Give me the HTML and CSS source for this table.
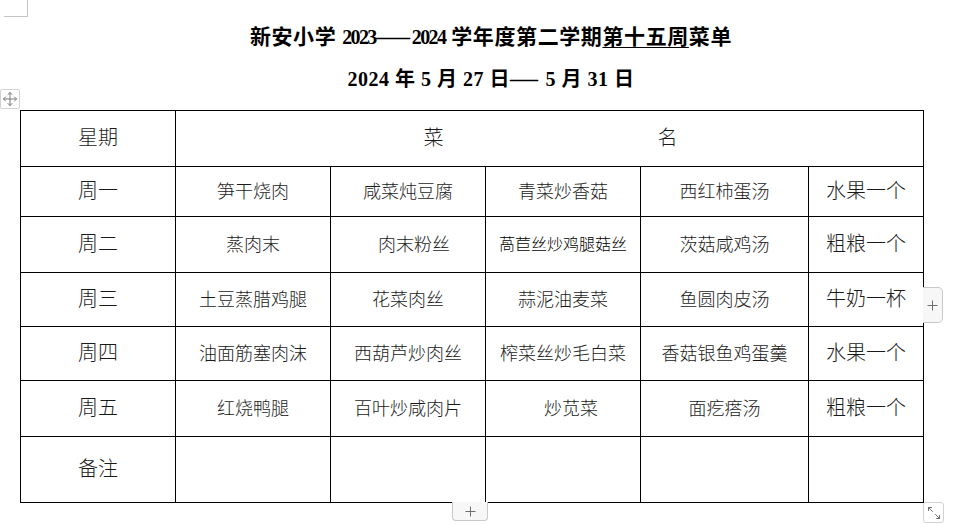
FILE: index.html
```html
<!DOCTYPE html>
<html lang="zh-CN">
<head>
<meta charset="utf-8">
<title>菜单</title>
<link rel="stylesheet" href="styles.css">
</head>
<body>
<div class="page">
  <div class="corner-mark"></div>
  <div class="title">
    <div class="tline tline1">新安小学 <span class="num">2023</span><span class="dash dash1">—</span><span class="num">2024</span> 学年度第二学期<span class="ul">第十五周</span>菜单</div>
    <div class="tline tline2">2024 年 5 月 27 日<span class="dash dash2">—</span> 5 月 31 日</div>
  </div>
  <div class="table-wrap">
    <span class="move-handle">
      <svg width="16" height="16" viewBox="0 0 16 16" fill="none" stroke="#7a7a7a" stroke-width="1" stroke-linecap="round" stroke-linejoin="round">
        <path d="M8 1.5v13M1.5 8h13"/>
        <path d="M6 3.5L8 1.5l2 2M6 12.5L8 14.5l2-2M3.5 6L1.5 8l2 2M12.5 6L14.5 8l-2 2"/>
      </svg>
    </span>
    <table class="menu">
      <colgroup>
        <col class="c-day"><col class="c-dish"><col class="c-dish"><col class="c-dish"><col class="c-soup"><col class="c-extra">
      </colgroup>
      <tr class="r-head">
        <td class="day">星期</td>
        <td class="head" colspan="5"><span class="hd"><span>菜</span><span>名</span></span></td>
      </tr>
      <tr class="r1">
        <td class="day">周一</td><td>笋干烧肉</td><td>咸菜炖豆腐</td><td>青菜炒香菇</td><td>西红柿蛋汤</td><td class="extra">水果一个</td>
      </tr>
      <tr class="r2">
        <td class="day">周二</td><td>蒸肉末</td><td class="shift-a">肉末粉丝</td><td class="small">萵苣丝炒鸡腿菇丝</td><td>茨菇咸鸡汤</td><td class="extra">粗粮一个</td>
      </tr>
      <tr class="r3">
        <td class="day">周三</td><td>土豆蒸腊鸡腿</td><td>花菜肉丝</td><td>蒜泥油麦菜</td><td>鱼圆肉皮汤</td><td class="extra">牛奶一杯</td>
      </tr>
      <tr class="r4">
        <td class="day">周四</td><td>油面筋塞肉沫</td><td>西葫芦炒肉丝</td><td>榨菜丝炒毛白菜</td><td>香菇银鱼鸡蛋羹</td><td class="extra">水果一个</td>
      </tr>
      <tr class="r5">
        <td class="day">周五</td><td>红烧鸭腿</td><td>百叶炒咸肉片</td><td class="shift-b">炒苋菜</td><td>面疙瘩汤</td><td class="extra">粗粮一个</td>
      </tr>
      <tr class="r6">
        <td class="day">备注</td><td></td><td></td><td></td><td></td><td></td>
      </tr>
    </table>
    <span class="add-col">
      <svg width="11" height="11" viewBox="0 0 11 11" stroke="#6e6e6e" stroke-width="1"><path d="M5.5 0.5v10M0.5 5.5h10"/></svg>
    </span>
    <span class="add-row">
      <svg width="11" height="11" viewBox="0 0 11 11" stroke="#6e6e6e" stroke-width="1"><path d="M5.5 0.5v10M0.5 5.5h10"/></svg>
    </span>
    <span class="resize">
      <svg width="16" height="16" viewBox="0 0 16 16" fill="none" stroke="#6e6e6e" stroke-width="1" stroke-linecap="round" stroke-linejoin="round">
        <path d="M2.5 2.5l4 4M2.5 2.5v3M2.5 2.5h3"/>
        <path d="M13.5 13.5l-4-4M13.5 13.5v-3M13.5 13.5h-3"/>
      </svg>
    </span>
  </div>
</div>
</body>
</html>
```

FILE: styles.css
```css
html, body {
  margin: 0;
  padding: 0;
  background: #ffffff;
}

.page {
  position: relative;
  width: 960px;
  height: 524px;
  overflow: hidden;
  font-family: "Liberation Serif", "Noto Sans CJK SC", serif;
  color: #111;
}

.corner-mark {
  position: absolute;
  left: 4px;
  top: 0;
  width: 23px;
  height: 16px;
  border-right: 1px solid #c4c4c4;
  border-bottom: 1px solid #c4c4c4;
}

.title {
  padding-top: 16px;
  padding-left: 22px;
  text-align: center;
  font-weight: bold;
  color: #000;
}

.tline {
  height: 42px;
  line-height: 42px;
  white-space: nowrap;
}

.tline1 {
  font-size: 21px;
  letter-spacing: 0.6px;
}

.tline1 .num {
  font-size: 20px;
  letter-spacing: -1.6px;
}

.dash {
  display: inline-block;
  text-align: left;
  overflow: visible;
  font-size: 20px;
  letter-spacing: 0;
}

.dash1 {
  width: 36px;
  transform: scaleX(1.7);
  transform-origin: 0 50%;
}

.dash2 {
  width: 30px;
  transform: scaleX(1.4);
  transform-origin: 0 50%;
}

.tline2 {
  font-size: 20px;
  letter-spacing: 0.5px;
}

.ul {
  text-decoration: underline;
  text-decoration-thickness: 1px;
  text-underline-offset: 3px;
}

.table-wrap {
  position: relative;
  margin-top: 10px;
  margin-left: 20px;
  width: 904px;
}

.menu {
  border-collapse: collapse;
  table-layout: fixed;
  width: 904px;
}

.menu td {
  border: 1px solid #000;
  padding: 0 0 4px 0;
  text-align: center;
  vertical-align: middle;
  font-size: 18px;
  font-weight: 300;
  color: #1a1a1a;
  white-space: nowrap;
}

.c-day { width: 155px; }
.c-dish { width: 155px; }
.c-soup { width: 168px; }
.c-extra { width: 115px; }

.menu td.day,
.menu td.extra,
.menu td.head {
  font-size: 20px;
}

.hd {
  display: inline-flex;
  gap: 214px;
  padding-left: 2px;
}

.menu td.small {
  font-size: 16px;
  font-family: "Noto Sans CJK SC", sans-serif;
  color: #000;
}

.menu td.shift-a { padding-left: 12px; }
.menu td.shift-b { padding-left: 16px; }

.r-head td { height: 51px; }
.r1 td { height: 45px; }
.r2 td { height: 51px; }
.r3 td { height: 49px; }
.r4 td { height: 49px; }
.r5 td { height: 51px; }
.r6 td { height: 61px; }

.move-handle {
  position: absolute;
  left: -20px;
  top: -21px;
  width: 18px;
  height: 18px;
  border: 1px solid #d2d2d2;
  border-radius: 2px;
  background: #fff;
  display: flex;
  align-items: center;
  justify-content: center;
}

.add-col {
  position: absolute;
  left: 903px;
  top: 177px;
  width: 19px;
  height: 34px;
  border: 1px solid #c8c8c8;
  border-left: none;
  border-radius: 0 5px 5px 0;
  background: #f7f7f7;
  display: flex;
  align-items: center;
  justify-content: center;
}

.add-row {
  position: absolute;
  left: 432px;
  top: 392px;
  width: 34px;
  height: 18px;
  border: 1px solid #c8c8c8;
  border-top: none;
  border-radius: 0 0 4px 4px;
  background: #f7f7f7;
  display: flex;
  align-items: center;
  justify-content: center;
}

.resize {
  position: absolute;
  left: 903px;
  top: 392px;
  width: 19px;
  height: 19px;
  border: 1px solid #d2d2d2;
  border-radius: 3px;
  background: #fff;
  display: flex;
  align-items: center;
  justify-content: center;
}
```
